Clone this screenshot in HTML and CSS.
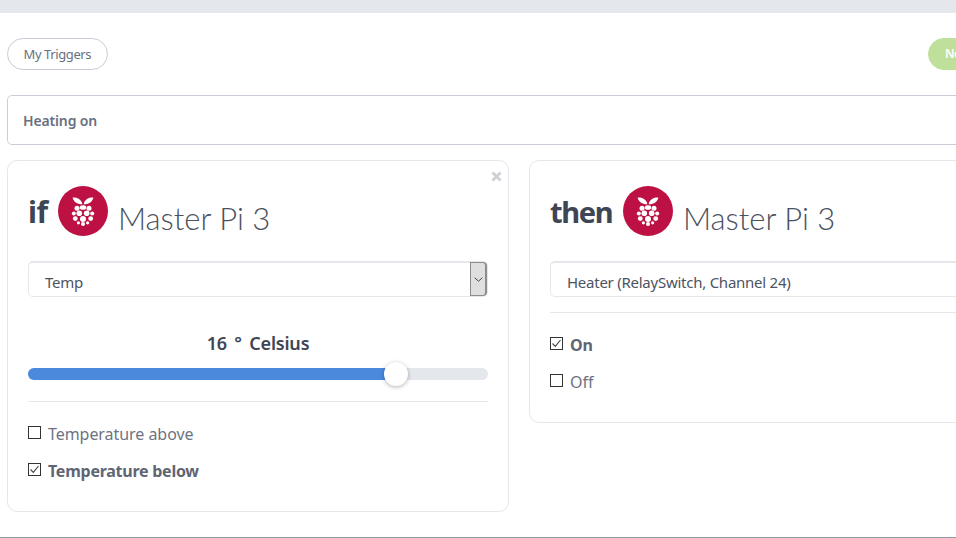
FILE: index.html
```html
<!DOCTYPE html>
<html lang="en">
<head>
<meta charset="utf-8">
<title>Heating on</title>
<link rel="stylesheet" href="styles.css">
</head>
<body>
<svg class="defs" width="0" height="0" aria-hidden="true">
  <symbol id="pi" viewBox="0 0 50 50">
    <circle cx="25" cy="25" r="25" fill="#bc1142"/>
    <g fill="#fff">
      <path d="M24.300 18.300c-.3-3-2.600-5.600-6-6.500-1.200-.3-2.500-.4-3.700-.1 .9 3.700 4.500 6.700 9.700 6.600z"/>
      <path d="M25.700 18.300c.3-3 2.600-5.600 6-6.500 1.200-.3 2.500-.4 3.700-.1-.9 3.700-4.500 6.700-9.700 6.600z"/>
      <ellipse cx="25" cy="21.500" rx="3.200" ry="2.300"/>
      <circle cx="19" cy="22.300" r="2.500"/>
      <circle cx="31" cy="22.300" r="2.500"/>
      <circle cx="15.800" cy="27.500" r="2"/>
      <circle cx="34.200" cy="27.500" r="2"/>
      <circle cx="21.300" cy="27.300" r="2.800"/>
      <circle cx="28.700" cy="27.300" r="2.800"/>
      <circle cx="17.300" cy="32.600" r="2.400"/>
      <circle cx="32.700" cy="32.600" r="2.400"/>
      <circle cx="25" cy="33" r="3"/>
      <circle cx="25" cy="38" r="2"/>
      <circle cx="20.400" cy="36.800" r="1.600"/>
      <circle cx="29.600" cy="36.800" r="1.600"/>
    </g>
  </symbol>
  <symbol id="tick" viewBox="0 0 13 13">
    <path d="M2.500 6.500l2.800 2.900 5.200-6.400" fill="none" stroke="#444" stroke-width="1.100"/>
  </symbol>
</svg>
<div class="topbar"></div>
<main class="page">
  <div class="toolbar">
    <a class="pill">My Triggers</a>
    <a class="pill pill-new">New Trigger</a>
  </div>
  <div class="name-field">Heating on</div>
  <div class="cards">
    <section class="card card-if">
      <svg class="close" viewBox="0 0 11 11"><path d="M1.500 1.500l8 8M9.500 1.500l-8 8" fill="none" stroke="#cfd1d6" stroke-width="3"/></svg>
      <h2 class="card-head">
        <span class="keyword">if</span>
        <svg class="pi"><use href="#pi"/></svg>
        <span class="device">Master Pi 3</span>
      </h2>
      <div class="select">
        <span class="select-text">Temp</span>
        <span class="select-btn"><svg width="9" height="5" viewBox="0 0 9 5"><path d="M.7.7l3.800 3.500L8.300.7" fill="none" stroke="#444" stroke-width="1"/></svg></span>
      </div>
      <div class="reading">16 ° Celsius</div>
      <div class="slider">
        <div class="slider-fill"></div>
        <div class="slider-thumb"></div>
      </div>
      <hr class="rule rule-if">
      <div class="options">
        <label class="option"><span class="box"></span>Temperature above</label>
        <label class="option option-on"><span class="box"><svg class="tick"><use href="#tick"/></svg></span>Temperature below</label>
      </div>
    </section>
    <section class="card card-then">
      <h2 class="card-head">
        <span class="keyword keyword-then">then</span>
        <svg class="pi"><use href="#pi"/></svg>
        <span class="device">Master Pi 3</span>
      </h2>
      <div class="select">
        <span class="select-text">Heater (RelaySwitch, Channel 24)</span>
      </div>
      <hr class="rule rule-then">
      <div class="options">
        <label class="option option-on"><span class="box"><svg class="tick"><use href="#tick"/></svg></span>On</label>
        <label class="option"><span class="box"></span>Off</label>
      </div>
    </section>
  </div>
</main>
</body>
</html>
```

FILE: styles.css
```css
* { box-sizing: border-box; }
html, body { height: 100%; }
body {
  margin: 0;
  overflow: hidden;
  background: #fff;
  color: #3e4555;
  font-family: "Noto Sans", "Open Sans", sans-serif;
  border-bottom: 1px solid #8f9aa3;
}
.defs { display: block; height: 0; }
.topbar { height: 13px; background: #e4e7eb; }
.page { width: 1046px; padding: 25px 0 0 7px; }
.toolbar { display: flex; justify-content: space-between; }
.pill {
  height: 32px;
  padding: 0 15.500px;
  border: 1px solid #c9cdd8;
  border-radius: 16px;
  font-size: 13px;
  line-height: 30px;
  color: #697080;
  letter-spacing: -.4px;
}
.pill-new {
  width: 118px;
  padding: 0 16px;
  border-color: #bfe09a;
  background: #bfe09a;
  color: #fff;
  font-size: 12px;
  font-weight: 600;
  white-space: nowrap;
}
.name-field {
  height: 50px;
  margin-top: 25px;
  padding: 0 15px;
  border: 1px solid #c9cdd8;
  border-radius: 5px;
  font-size: 14px;
  font-weight: 600;
  line-height: 50px;
  color: #697080;
  letter-spacing: -.15px;
}
.cards {
  display: grid;
  grid-template-columns: 502px 502px;
  gap: 20px;
  align-items: start;
  margin-top: 15px;
}
.card {
  position: relative;
  padding: 0 20px;
  border: 1px solid #e6e7ec;
  border-radius: 10px;
}
.card-if { height: 352px; }
.card-then { height: 263px; }
.close {
  position: absolute;
  top: 10px;
  right: 6px;
  width: 11px;
  height: 11px;
}
.card-head {
  display: flex;
  align-items: flex-start;
  height: 50px;
  margin: 25px 0 25px;
  font-weight: 400;
}
.keyword {
  width: 30px;
  font-size: 30px;
  font-weight: 700;
  line-height: 52px;
  color: #3e4555;
  letter-spacing: -.4px;
}
.keyword-then { width: 73px; font-size: 29px; letter-spacing: -1.300px; }
.pi { width: 50px; height: 50px; flex: none; }
.device {
  margin: 8px 0 0 10px;
  font-family: "Lato", sans-serif;
  font-size: 31px;
  font-weight: 300;
  line-height: 48px;
  color: #4a5160;
  white-space: nowrap;
}
.select {
  position: relative;
  height: 36px;
  padding-left: 16px;
  border: 1px solid #e6e7ec;
  border-top-width: 2px;
  border-radius: 5px;
  font-size: 15px;
  line-height: 38px;
  color: #4c5362;
  letter-spacing: -.25px;
  white-space: nowrap;
}
.select-btn {
  position: absolute;
  top: -1px;
  right: 0;
  bottom: 0;
  width: 17px;
  display: flex;
  align-items: center;
  justify-content: center;
  background: #dfdfdf;
  border: 1px solid #8d8d8d;
  border-right-width: 2px;
  border-radius: 0 4px 4px 0;
}
.reading {
  margin-top: 33px;
  text-align: center;
  font-size: 18px;
  font-weight: 600;
  line-height: 26px;
  color: #3e4555;
  letter-spacing: -.2px;
  word-spacing: 3px;
}
.slider {
  position: relative;
  height: 12px;
  margin-top: 12px;
  border-radius: 6px;
  background: #e4e7eb;
}
.slider-fill {
  width: 368px;
  height: 12px;
  border-radius: 6px 0 0 6px;
  background: #4a89dc;
}
.slider-thumb {
  position: absolute;
  top: -6px;
  left: 356px;
  width: 24px;
  height: 24px;
  border-radius: 50%;
  background: #fff;
  box-shadow: 0 1px 4px rgba(0, 0, 0, .3);
}
.rule { margin: 0; border: 0; border-top: 1px solid #e6e7ec; }
.rule-if { margin-top: 21px; }
.rule-then { margin-top: 15px; }
.options { display: flex; flex-direction: column; gap: 13px; margin-top: 20px; }
.option {
  display: flex;
  align-items: center;
  height: 24px;
  font-size: 16px;
  color: #6d7382;
  letter-spacing: -.05px;
  white-space: nowrap;
}
.option-on { font-weight: 700; color: #5f6573; letter-spacing: -.25px; }
.box {
  position: relative;
  flex: none;
  width: 13px;
  height: 13px;
  margin: 0 7px 3px 0;
  border: 1px solid #333;
}
.tick { position: absolute; top: -1px; left: -1px; width: 13px; height: 13px; }
```
